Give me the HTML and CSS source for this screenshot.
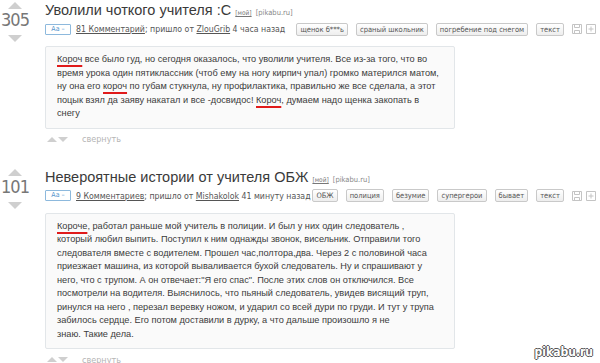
FILE: index.html
```html
<html>
  <head>
    <meta charset="utf-8">
    <title>pikabu</title>
    <link rel="stylesheet" href="styles.css">
  </head>
  <body>
    <div class="story">
      <div class="rating">
        <span class="vote-up"></span>
        <div class="score">305</div>
        <span class="vote-down"></span>
      </div>
      <div class="story-main">
        <div class="story-title">
          <a href="#">Уволили чоткого учителя :С</a>
          <span class="mine">[мой]</span>
          <span class="source">[pikabu.ru]</span>
        </div>
        <div class="story-meta">
          <span class="font-btn">Aa –</span>
          <span class="info"><a href="#">81 Комментарий</a>; пришло от <a href="#">ZlouGrib</a> 4 часа назад</span>
          <span class="tags">
            <span class="tag">щенок б***ь</span>
            <span class="tag">сраный школьник</span>
            <span class="tag">погребение под снегом</span>
            <span class="tag">текст</span>
          </span>
          <span class="tools">
            <svg width="10" height="10" viewBox="0 0 10 10"><path d="M0.5 0.5h9v9h-9z M2.5 0.5v3h5v-3 M2.5 9.5v-3h5v3" fill="none" stroke="#c4c4c4"/></svg>
            <svg width="10" height="10" viewBox="0 0 10 10"><path d="M0.5 0.5h9v9h-9z M5 2.5v5 M2.5 5h5" fill="none" stroke="#c4c4c4"/></svg>
          </span>
        </div>
        <div class="story-text">
          <span class="hl">Короч</span> все было гуд, но сегодня оказалось, что уволили учителя. Все из-за того, что во время урока один пятиклассник (чтоб ему на ногу кирпич упал) громко матерился матом, ну она его <span class="hl">короч</span> по губам стукнула, ну профилактика, правильно же все сделала, а этот поцык взял да заяву накатал и все -досвидос! <span class="hl">Короч</span>, думаем надо щенка закопать в снегу
        </div>
        <div class="story-actions">
          <span class="mini-up"></span><span class="mini-down"></span>
          <span class="collapse">свернуть</span>
        </div>
      </div>
    </div>

    <div class="story">
      <div class="rating">
        <span class="vote-up"></span>
        <div class="score">101</div>
        <span class="vote-down"></span>
      </div>
      <div class="story-main">
        <div class="story-title">
          <a href="#">Невероятные истории от учителя ОБЖ</a>
          <span class="mine">[мой]</span>
          <span class="source">[pikabu.ru]</span>
        </div>
        <div class="story-meta">
          <span class="font-btn">Aa –</span>
          <span class="info"><a href="#">9 Комментариев</a>; пришло от <a href="#">Mishakolok</a> 41 минуту назад</span>
          <span class="tags">
            <span class="tag">ОБЖ</span>
            <span class="tag">полиция</span>
            <span class="tag">безумие</span>
            <span class="tag">супергерои</span>
            <span class="tag">бывает</span>
            <span class="tag">текст</span>
          </span>
          <span class="tools">
            <svg width="10" height="10" viewBox="0 0 10 10"><path d="M0.5 0.5h9v9h-9z M2.5 0.5v3h5v-3 M2.5 9.5v-3h5v3" fill="none" stroke="#c4c4c4"/></svg>
            <svg width="10" height="10" viewBox="0 0 10 10"><path d="M0.5 0.5h9v9h-9z M5 2.5v5 M2.5 5h5" fill="none" stroke="#c4c4c4"/></svg>
          </span>
        </div>
        <div class="story-text">
          <span class="hl">Короче</span>, работал раньше мой учитель в полиции. И был у них один следователь ,<br>
          который любил выпить. Поступил к ним однажды звонок, висельник. Отправили того следователя вместе с водителем. Прошел час,полтора,два. Через 2 с половиной часа приезжает машина, из которой вываливается бухой следователь. Ну и спрашивают у него, что с трупом. А он отвечает:"Я его спас". После этих слов он отключился. Все посмотрели на водителя. Выяснилось, что пьяный следователь, увидев висящий труп, ринулся на него , перезал веревку ножом, и ударил со всей дури по груди. И тут у трупа забилось сердце. Его потом доставили в дурку, а что дальше произошло я не<br>
          знаю. Такие дела.
        </div>
        <div class="story-actions">
          <span class="mini-up"></span><span class="mini-down"></span>
          <span class="collapse">свернуть</span>
        </div>
      </div>
    </div>

    <div class="watermark">pikabu.ru</div>
  </body>
</html>
```

FILE: styles.css
```css
body {
  margin: 0;
  width: 600px;
  height: 363px;
  overflow: hidden;
  position: relative;
  background: #fff;
  color: #3a3a3a;
  font-family: "DejaVu Sans Condensed", "DejaVu Sans", sans-serif;
  font-size: 9px;
}
a {
  color: #555;
}

.story {
  display: flex;
}
.story + .story {
  margin-top: 22px;
}

.rating {
  width: 30px;
  margin-right: 15px;
  padding-top: 2px;
  display: flex;
  flex-direction: column;
  align-items: center;
}
.vote-up, .vote-down {
  width: 0;
  height: 0;
  border-left: 7px solid transparent;
  border-right: 7px solid transparent;
}
.vote-up {
  border-bottom: 7px solid #cfcfcf;
}
.vote-down {
  margin-top: 4px;
  border-top: 7px solid #cfcfcf;
}
.score {
  font-size: 18px;
  line-height: 22px;
  letter-spacing: -1px;
  color: #777;
}

.story-main {
  flex: 1;
  min-width: 0;
  padding-right: 4px;
}
.story-title {
  font-family: "Liberation Sans", Arial, sans-serif;
  font-size: 14.5px;
  line-height: 20px;
  white-space: nowrap;
}
.story-title a {
  color: #3a3a3a;
  text-decoration: none;
}
.mine {
  font-family: "DejaVu Sans Condensed", "DejaVu Sans", sans-serif;
  font-size: 6.5px;
  color: #777;
  text-decoration: underline;
}
.source {
  font-family: "DejaVu Sans Condensed", "DejaVu Sans", sans-serif;
  font-size: 7.5px;
  color: #888;
}

.story-meta {
  display: flex;
  align-items: center;
  height: 12px;
  color: #555;
  font-size: 8.7px;
  white-space: nowrap;
}
.font-btn {
  box-sizing: border-box;
  width: 26px;
  height: 11px;
  margin-right: 5px;
  border: 1px solid #8db9dd;
  border-radius: 1px;
  color: #4f93cd;
  font-size: 7px;
  line-height: 9px;
  text-align: center;
}
.tags {
  margin-left: auto;
  display: flex;
  gap: 8px;
}
.tag {
  height: 11px;
  padding: 0 3px;
  border: 1px solid #c9c9c9;
  border-radius: 2px;
  background: linear-gradient(#fff, #eee);
  font-size: 7.5px;
  line-height: 11px;
  color: #555;
}
.tools {
  display: flex;
  flex-shrink: 0;
  gap: 4px;
  margin-left: 8px;
}

.story-text {
  width: 386px;
  margin-top: 11px;
  padding: 6px 11px 7px;
  border: 1px solid #e2e6e9;
  border-radius: 2px;
  background: #fafafa;
  font-family: "Liberation Sans", Arial, sans-serif;
  font-size: 9.2px;
  line-height: 13.5px;
  color: #3a3a3a;
}
.hl {
  text-decoration: underline #e01b1b;
  text-decoration-thickness: 2px;
  text-underline-offset: 3px;
}

.story-actions {
  display: flex;
  align-items: center;
  height: 11px;
  margin-top: 5px;
  padding-left: 2px;
}
.mini-up, .mini-down {
  width: 0;
  height: 0;
  border-left: 5px solid transparent;
  border-right: 5px solid transparent;
}
.mini-up {
  border-bottom: 5px solid #cfcfcf;
}
.mini-down {
  margin-left: 1px;
  border-top: 5px solid #cfcfcf;
}
.collapse {
  margin-left: 14px;
  color: #b5b5b5;
}

.watermark {
  position: absolute;
  right: 7px;
  bottom: 4px;
  font-family: "DejaVu Sans Condensed", "DejaVu Sans", sans-serif;
  font-weight: bold;
  font-size: 12px;
  color: #fff;
  text-shadow: -1px 0 #555, 1px 0 #555, 0 -1px #555, 0 1px #555;
}
```
